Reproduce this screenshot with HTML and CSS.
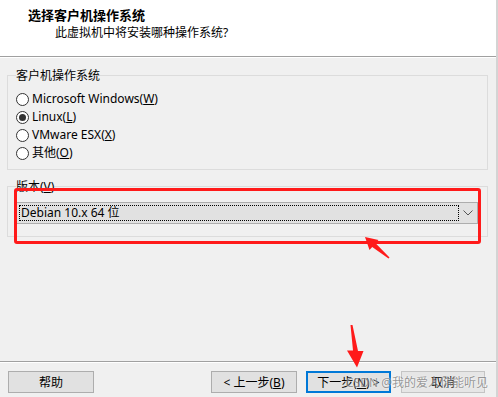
FILE: index.html
```html
<!DOCTYPE html>
<html lang="zh-CN">
<head>
    <meta charset="UTF-8">
    <title>新建虚拟机向导</title>
    <link rel="stylesheet" href="styles.css">
</head>
<body>
    <div class="wizard">
        <div class="header">
            <div class="title">选择客户机操作系统</div>
            <div class="subtitle">此虚拟机中将安装哪种操作系统?</div>
        </div>

        <div class="content">
            <fieldset class="group">
                <legend>客户机操作系统</legend>
                <div class="radio-row"><span class="radio"></span>Microsoft Windows(<u>W</u>)</div>
                <div class="radio-row"><span class="radio checked"></span>Linux(<u>L</u>)</div>
                <div class="radio-row"><span class="radio"></span>VMware ESX(<u>X</u>)</div>
                <div class="radio-row"><span class="radio"></span>其他(<u>O</u>)</div>
            </fieldset>

            <fieldset class="group version-group">
                <legend>版本(<u>V</u>)</legend>
                <div class="combo">
                    <div class="combo-field">Debian 10.x 64 位</div>
                    <div class="combo-arrow">
                        <svg width="10" height="6" viewBox="0 0 10 6"><polyline points="0.5,0.5 5,5 9.5,0.5" fill="none" stroke="#555" stroke-width="1"/></svg>
                    </div>
                </div>
            </fieldset>
        </div>

        <div class="footer">
            <button class="btn">帮助</button>
            <div class="nav-buttons">
                <button class="btn">&lt; 上一步(<u>B</u>)</button>
                <button class="btn btn-default">下一步(<u>N</u>) &gt;</button>
                <button class="btn btn-cancel">取消</button>
            </div>
        </div>

        <!-- annotations drawn over the screenshot -->
        <div class="mark-box"></div>
        <svg class="arrows" width="498" height="397" viewBox="0 0 498 397">
            <polygon fill="#ff1a1a" points="365,237 378.5,240 375.6,243.3 389.5,257.5 388.5,258.5 372.2,246.9 369.5,250"/>
            <polygon fill="#ff1a1a" points="350.5,325 352.5,325 358,351 363.5,351 357,367.5 347,350.5 353,350.5"/>
        </svg>
        <div class="watermark">CSDN @我的爱人你能听见</div>
    </div>
</body>
</html>
```

FILE: styles.css
```css
html, body {
    margin: 0;
    padding: 0;
}
body {
    font-family: "Noto Sans", "Noto Sans CJK SC", sans-serif;
    font-size: 12px;
    color: #000;
    background-color: #f0f0f0;
}
.wizard {
    position: relative;
    width: 498px;
    height: 397px;
    display: flex;
    flex-direction: column;
    box-sizing: border-box;
    border-right: 2px solid #d4d4d4;
    overflow: hidden;
}
.header {
    height: 57px;
    box-sizing: border-box;
    padding: 7px 0 0 28px;
    background-color: #fff;
    border-bottom: 1px solid #a0a0a0;
    box-shadow: 0 1px 0 #fff, 2px 0 0 #4d4d4d;
    line-height: 17px;
}
.title {
    font-size: 13px;
    font-weight: bold;
}
.subtitle {
    padding-left: 27px;
}
.content {
    flex: 1;
    padding: 10px 0 0 7px;
}
.group {
    width: 481px;
    box-sizing: border-box;
    margin: 0;
    padding: 6px 8px 7px 8px;
    border: 1px solid #dcdcdc;
}
.group legend {
    padding: 0;
    line-height: 17px;
}
.radio-row {
    display: flex;
    align-items: center;
    height: 18px;
    line-height: 18px;
}
.radio {
    width: 11px;
    height: 11px;
    border: 1px solid #333;
    border-radius: 50%;
    background-color: #fff;
    margin-right: 3px;
    position: relative;
}
.radio.checked::after {
    content: "";
    position: absolute;
    left: 2px;
    top: 2px;
    width: 7px;
    height: 7px;
    border-radius: 50%;
    background-color: #333;
}
.version-group {
    margin-top: 8px;
    padding: 7px 8px 12px 8px;
}
.combo {
    display: flex;
    height: 22px;
    width: 462px;
    box-sizing: border-box;
    border: 1px solid #adadad;
    background-color: #e1e1e1;
}
.combo-field {
    flex: 1;
    margin: 2px 0 2px 2px;
    padding-left: 1px;
    border: 1px dotted #000;
    line-height: 14px;
}
.combo-arrow {
    width: 18px;
    display: flex;
    align-items: center;
    justify-content: center;
}
.footer {
    display: flex;
    height: 36px;
    box-sizing: border-box;
    padding: 9px 11px 0 8px;
    border-top: 1px solid #a0a0a0;
    box-shadow: inset 0 1px 0 #fff;
}
.nav-buttons {
    margin-left: auto;
    display: flex;
    gap: 9px;
}
.btn {
    width: 86px;
    height: 22px;
    padding: 0;
    font-family: inherit;
    font-size: 12px;
    color: #000;
    background-color: #e1e1e1;
    border: 1px solid #adadad;
}
.btn-default {
    width: 85px;
    border: 2px solid #0078d7;
}
.btn-cancel {
    width: 84px;
    margin-left: 1px;
    border-color: #c4c4c4;
    background-color: #e6e6e6;
}
.mark-box {
    position: absolute;
    left: 14px;
    top: 188px;
    width: 467px;
    height: 56px;
    box-sizing: border-box;
    border: 3px solid #ff1a1a;
    border-radius: 3px;
}
.arrows {
    position: absolute;
    left: 0;
    top: 0;
}
.watermark {
    position: absolute;
    left: 346px;
    top: 374px;
    font-size: 12px;
    line-height: 17px;
    color: rgba(95, 95, 95, 0.65);
    text-shadow: 0 0 2px #fff;
    white-space: nowrap;
}
```
